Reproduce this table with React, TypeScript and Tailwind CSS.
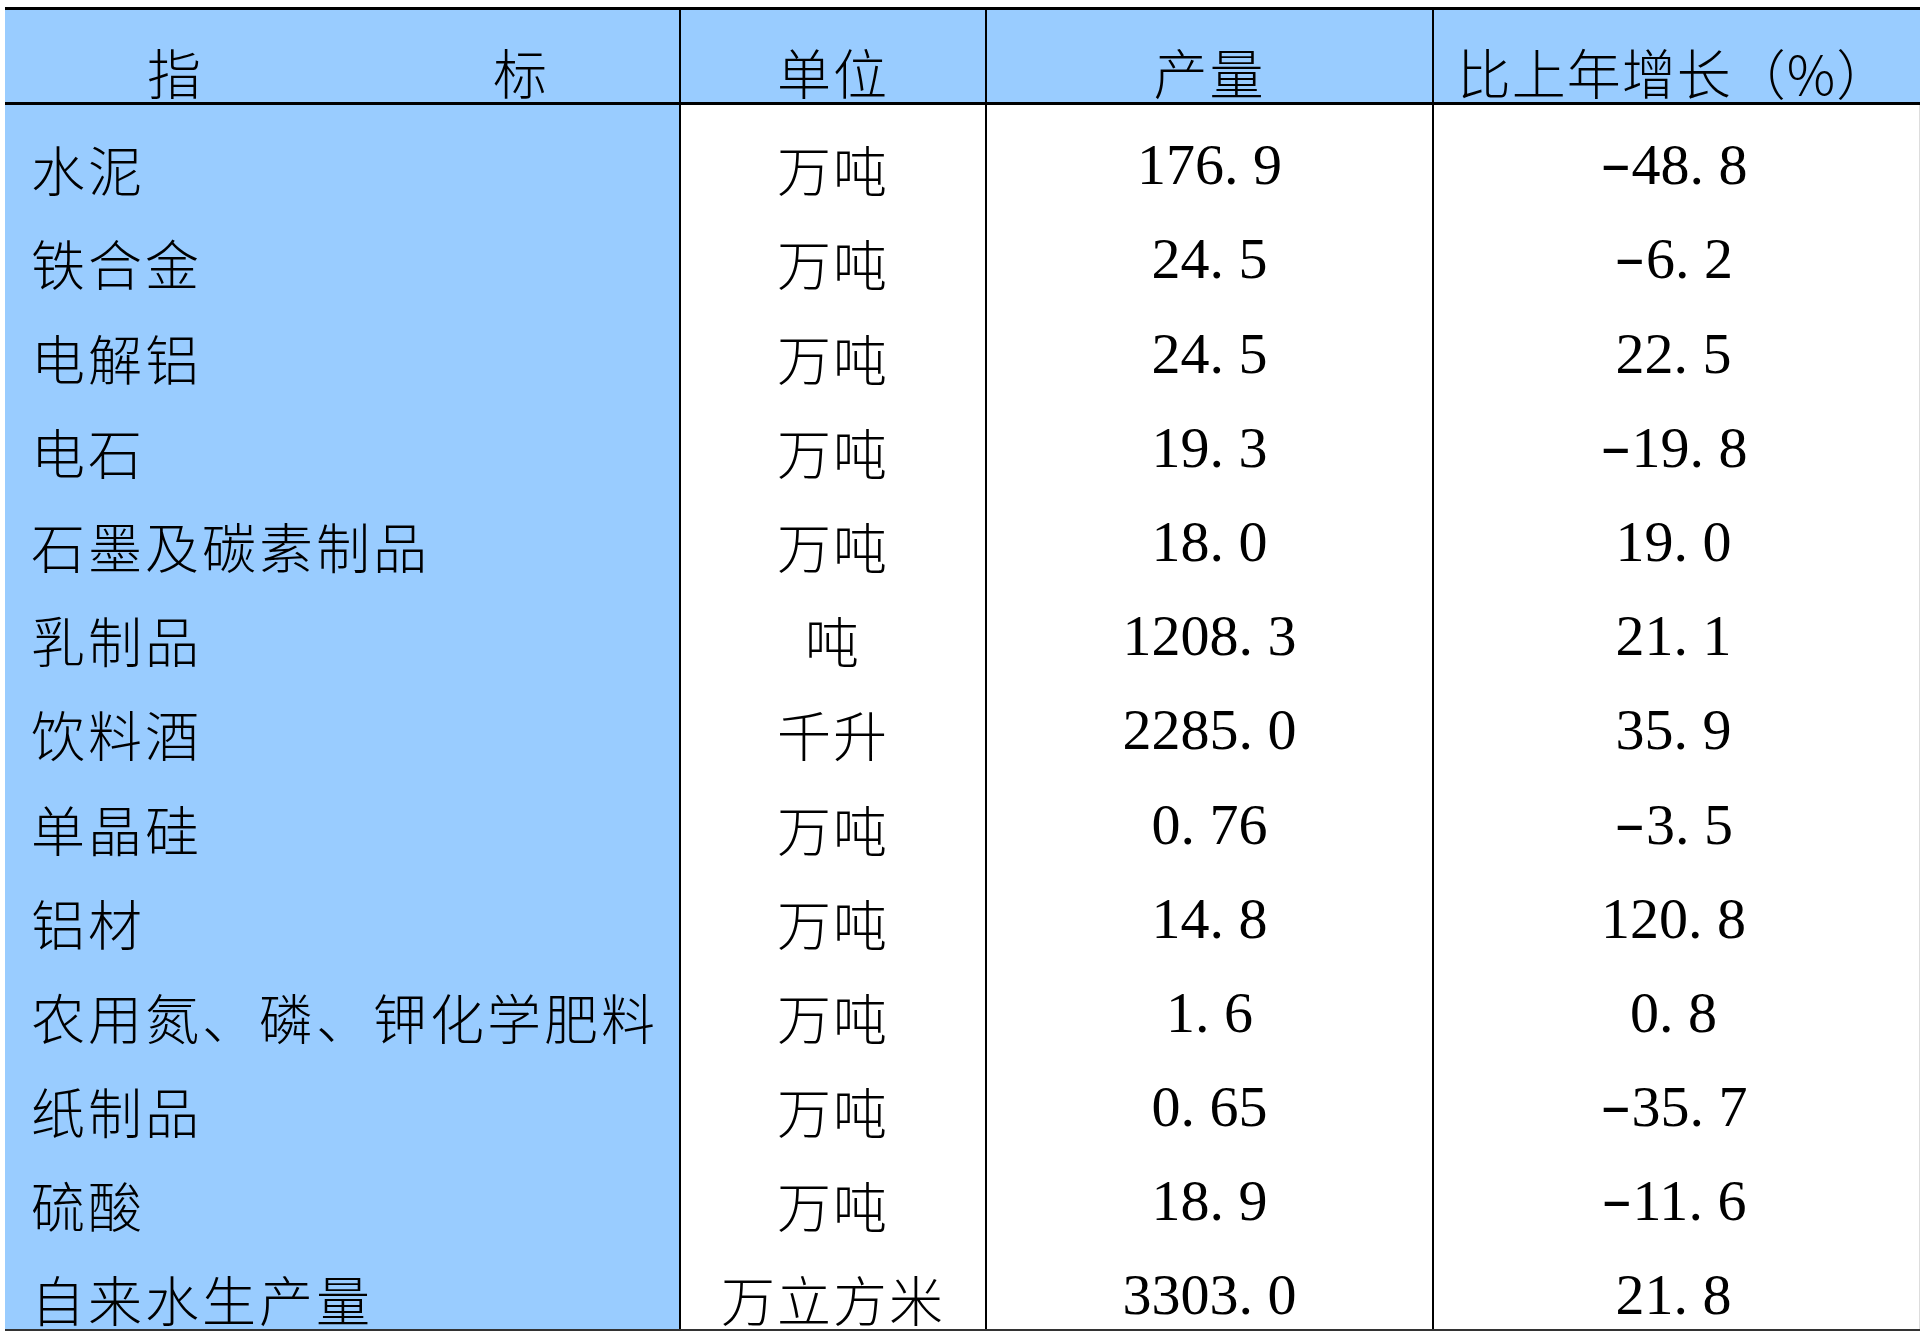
const rows: [string, string, string, string][] = [
  ["水泥", "万吨", "176.9", "-48.8"],
  ["铁合金", "万吨", "24.5", "-6.2"],
  ["电解铝", "万吨", "24.5", "22.5"],
  ["电石", "万吨", "19.3", "-19.8"],
  ["石墨及碳素制品", "万吨", "18.0", "19.0"],
  ["乳制品", "吨", "1208.3", "21.1"],
  ["饮料酒", "千升", "2285.0", "35.9"],
  ["单晶硅", "万吨", "0.76", "-3.5"],
  ["铝材", "万吨", "14.8", "120.8"],
  ["农用氮、磷、钾化学肥料", "万吨", "1.6", "0.8"],
  ["纸制品", "万吨", "0.65", "-35.7"],
  ["硫酸", "万吨", "18.9", "-11.6"],
  ["自来水生产量", "万立方米", "3303.0", "21.8"],
];

const cjk = "font-['Noto_Sans_CJK_SC',sans-serif] font-light text-[54px] leading-none text-black";
const num = "font-['Liberation_Serif',serif] text-[58px] leading-none text-black";

function Num({ value }: { value: string }) {
  const neg = value.startsWith("-");
  const body = neg ? value.slice(1) : value;
  const [a, b] = body.split(".");
  return (
    <span className={num + " whitespace-nowrap"}>
      {neg && (
        <span className="inline-block w-[0.55em] text-center">
          <span className="inline-block scale-x-[1.6] -translate-y-[0.06em]">-</span>
        </span>
      )}
      {a}
      {b !== undefined && (
        <>
          <span className="inline-block w-[0.5em] text-left">.</span>
          {b}
        </>
      )}
    </span>
  );
}

export default function App() {
  return (
    <div className="w-[1920px] h-[1335px] bg-white pt-[7px] pl-[5px] overflow-hidden">
      <div className="w-[1915px] border-t-[3px] border-b-[2px] border-t-black border-b-[#333]">
        <div className="grid grid-cols-[676px_306px_447px_486px] h-[95px] bg-[#99ccff] border-b-[3px] border-black">
          <div className="flex items-end justify-center gap-[292px] pl-[10px] pb-[3px] border-r-2 border-black">
            <span className={cjk}>指</span>
            <span className={cjk}>标</span>
          </div>
          <div className="flex items-end justify-center pb-[3px] border-r-2 border-black">
            <span className={cjk + " tracking-[2px]"}>单位</span>
          </div>
          <div className="flex items-end justify-center pb-[3px] border-r-2 border-black">
            <span className={cjk + " tracking-[2px]"}>产量</span>
          </div>
          <div className="flex items-end justify-center pb-[3px] pr-[6px]">
            <span className={cjk + " tracking-[1px]"}>比上年增长（%）</span>
          </div>
        </div>
        <div className="grid grid-cols-[676px_306px_447px_486px]">
          {rows.map((r) => (
            <div key={r[0]} className="contents">
              <div className="h-[94.2px] bg-[#99ccff] flex items-end pl-[26px] pb-[3px] border-r-2 border-black">
                <span className={cjk + " tracking-[3px] whitespace-nowrap"}>{r[0]}</span>
              </div>
              <div className="h-[94.2px] flex items-end justify-center pb-[3px] border-r-2 border-black">
                <span className={cjk + " tracking-[2px] whitespace-nowrap"}>{r[1]}</span>
              </div>
              <div className="h-[94.2px] flex items-end justify-center pb-[5px] border-r-2 border-black">
                <Num value={r[2]} />
              </div>
              <div className="h-[94.2px] flex items-end justify-center pb-[5px] pr-[6px] border-r border-[#ddd]">
                <Num value={r[3]} />
              </div>
            </div>
          ))}
        </div>
      </div>
    </div>
  );
}
